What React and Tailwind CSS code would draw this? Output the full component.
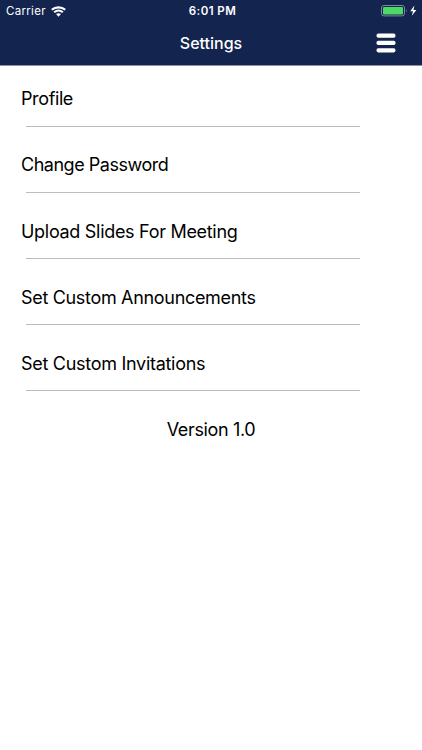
const items = [
  { label: 'Profile', tracking: 'tracking-[-0.38px]' },
  { label: 'Change Password', tracking: 'tracking-[-0.48px]' },
  { label: 'Upload Slides For Meeting', tracking: 'tracking-[-0.3px]' },
  { label: 'Set Custom Announcements', tracking: 'tracking-[-0.32px]' },
  { label: 'Set Custom Invitations', tracking: 'tracking-[-0.29px]' },
]

function WifiIcon() {
  return (
    <svg width="15" height="11" viewBox="0 0 15 11" fill="none" stroke="white">
      <path d="M.8 3.8C4.5 .5 10.5 .5 14.2 3.8" strokeWidth="2.2" />
      <path d="M3.1 6.3C5.7 4.1 9.3 4.1 11.9 6.3" strokeWidth="2" />
      <path d="M5 8.1C6.4 6.8 8.6 6.8 10 8.1L7.5 10.7Z" fill="white" stroke="none" />
    </svg>
  )
}

function BatteryIcon() {
  return (
    <svg width="36" height="12" viewBox="0 0 36 12">
      <rect x="0.5" y="0.5" width="23" height="10.4" rx="2.4" fill="none" stroke="#7f8aa6" />
      <rect x="2" y="2" width="20" height="7.4" rx="1.2" fill="#4cd964" />
      <path d="M25 4Q26.6 5.7 25 7.4Z" fill="#7f8aa6" />
      <path d="M33.4 .6L29.2 6.3H32L30.8 10.8L35.4 4.9H32.5Z" fill="white" />
    </svg>
  )
}

function MenuIcon() {
  return (
    <svg width="20" height="20" viewBox="0 0 20 20" fill="white">
      <rect x="0.5" y="0.6" width="19" height="4.2" rx="1.8" />
      <rect x="0.5" y="7.8" width="19" height="4.2" rx="1.8" />
      <rect x="0.5" y="15.2" width="19" height="4.2" rx="1.8" />
    </svg>
  )
}

function Header() {
  return (
    <header className="h-[66px] bg-[#13244f] text-white border-b border-[#8b93a5]">
      <div className="grid h-[22px] grid-cols-3 items-center pl-[6px] pr-[5px]">
        <div className="flex items-center gap-[5px] text-[11.5px] tracking-[0.3px]">
          <span className="pt-px">Carrier</span>
          <WifiIcon />
        </div>
        <span className="pt-px pl-[2px] text-center text-[11.5px] font-semibold tracking-[0.45px]">6:01 PM</span>
        <div className="flex justify-end">
          <BatteryIcon />
        </div>
      </div>
      <div className="grid h-[42px] grid-cols-3 items-center pr-[26px] pl-[26px]">
        <h1 className="col-start-2 text-center text-[16px] font-medium">Settings</h1>
        <button className="justify-self-end" aria-label="Menu">
          <MenuIcon />
        </button>
      </div>
    </header>
  )
}

export default function App() {
  return (
    <div className="h-[750px] w-[422px] overflow-hidden bg-white font-['Inter',sans-serif] text-black">
      <Header />
      <main>
        <ul>
          {items.map(({ label, tracking }) => (
            <li key={label} className="flex h-[66.1px] flex-col pt-[19.4px] pl-[21px]">
              <span className={`text-[18px] leading-7 ${tracking}`}>{label}</span>
              <div className="mt-[12.4px] ml-[5px] h-px w-[334px] shrink-0 bg-[#bcbcbc]" />
            </li>
          ))}
        </ul>
        <p className="pt-[19.4px] text-center text-[18px] leading-7 tracking-[-0.35px]">Version 1.0</p>
      </main>
    </div>
  )
}
